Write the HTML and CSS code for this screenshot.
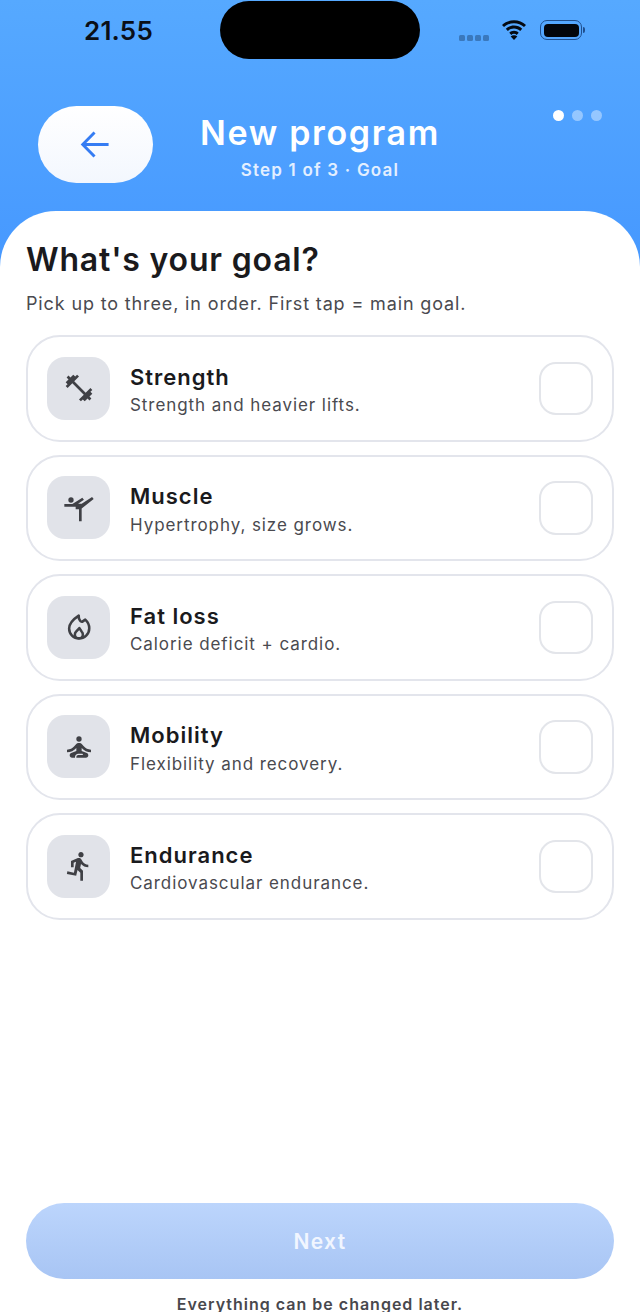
FILE: index.html
```html
<!DOCTYPE html>
<html lang="en">
<head>
<meta charset="utf-8">
<title>New program</title>
<link rel="stylesheet" href="styles.css">
</head>
<body>
<div class="app">
  <header class="hero">
    <div class="status">
      <span class="time">21.55</span>
      <span class="island"></span>
      <div class="status-icons">
        <span class="signal"><i></i><i></i><i></i><i></i></span>
        <svg class="wifi" viewBox="0 0 26 20"><path d="M13 3.2c3.9 0 7.4 1.5 10 3.9l2-2.2C21.800 2 17.600.2 13 .2S4.200 2 1 4.900l2 2.200c2.600-2.400 6.100-3.900 10-3.900z"/><path d="M13 8.600c2.400 0 4.600.9 6.200 2.400l2-2.200C19 6.800 16.100 5.600 13 5.600S7 6.800 4.800 8.800l2 2.200c1.600-1.500 3.800-2.400 6.200-2.400z"/><path d="M13 13.800c1.100 0 2 .4 2.700 1.100l2-2.200C16.400 11.500 14.800 10.800 13 10.800s-3.400.7-4.700 1.900l2 2.200c.7-.7 1.600-1.100 2.700-1.100z"/><path d="M13 20l3.300-3.600c-.9-.7-2-1.100-3.300-1.100s-2.400.4-3.300 1.100z"/></svg>
        <span class="battery"><span class="battery-fill"></span></span>
        <span class="battery-cap"></span>
      </div>
    </div>
    <div class="nav">
      <button class="back" aria-label="Back">
        <svg viewBox="0 0 32 32" class="back-icon"><path d="M29.500 16H3M15 3.500 2.800 16 15 28.500"/></svg>
      </button>
      <div class="titles">
        <h1>New program</h1>
        <p>Step 1 of 3 · Goal</p>
      </div>
      <div class="dots"><i class="on"></i><i></i><i></i></div>
    </div>
  </header>

  <main class="sheet">
    <h2>What's your goal?</h2>
    <p class="lead">Pick up to three, in order. First tap = main goal.</p>
    <ul class="goals">
      <li class="goal">
        <span class="tile"><svg viewBox="0 0 24 24"><path d="M20.570 14.860 22 13.430 20.570 12 17 15.570 8.430 7 12 3.430 10.570 2 9.140 3.430 7.710 2 5.570 4.140 4.140 2.710 2.710 4.140l1.430 1.430L2 7.710l1.430 1.430L2 10.570 3.430 12 7 8.430 15.570 17 12 20.570 13.430 22l1.430-1.430L16.290 22l2.140-2.140 1.430 1.430 1.430-1.430-1.430-1.430L22 16.290z"/></svg></span>
        <div class="copy"><strong>Strength</strong><span>Strength and heavier lifts.</span></div>
        <span class="check"></span>
      </li>
      <li class="goal">
        <span class="tile"><svg viewBox="0 0 24 24"><circle cx="6" cy="6" r="2"/><path d="M1 9h6l7.500-4.700 1.200 1.500L11.300 8.800H14L21.800 3.800 23 5.200 14 12.300V22h-2v-9H9.500V11H1z"/></svg></span>
        <div class="copy"><strong>Muscle</strong><span>Hypertrophy, size grows.</span></div>
        <span class="check"></span>
      </li>
      <li class="goal">
        <span class="tile"><svg class="line" viewBox="0 0 24 24"><path d="M11.800 3.500c-.2 3 1.700 5.300 3 4.300l1.900-1.300c2 1.800 3 4.200 3 6.500 0 4.400-3.600 7.700-7.700 7.700s-7.400-3.300-7.400-7.500C4.600 9 8 6 11.800 3.500z"/><path d="M12.300 12.800l-2.500 2.700c-.6.6-.9 1.300-.9 2.100 0 1.600 1.300 2.900 3 2.900s3-1.300 3-2.900c0-.8-.3-1.500-.9-2.100z"/></svg></span>
        <div class="copy"><strong>Fat loss</strong><span>Calorie deficit + cardio.</span></div>
        <span class="check"></span>
      </li>
      <li class="goal">
        <span class="tile"><svg viewBox="0 0 24 24"><circle cx="12" cy="6" r="2"/><path d="M21 16v-2c-2.240 0-4.160-.96-5.600-2.680l-1.340-1.600c-.38-.46-.94-.72-1.530-.72h-1.050c-.59 0-1.150.26-1.530.72l-1.340 1.600C7.160 13.040 5.240 14 3 14v2c2.770 0 5.190-1.170 7-3.250V15l-3.880 1.550c-.67.27-1.120.93-1.120 1.660C5 19.200 5.800 20 6.790 20H9v-.5c0-1.380 1.120-2.500 2.500-2.500h3c.28 0 .5.220.5.500s-.22.500-.5.500h-3c-.83 0-1.500.67-1.500 1.500v.5h7.210c.99 0 1.790-.8 1.790-1.790 0-.73-.45-1.390-1.120-1.660L14 15v-2.250c1.810 2.080 4.230 3.250 7 3.250z"/></svg></span>
        <div class="copy"><strong>Mobility</strong><span>Flexibility and recovery.</span></div>
        <span class="check"></span>
      </li>
      <li class="goal">
        <span class="tile"><svg viewBox="0 0 24 24"><path d="M13.490 5.480c1.100 0 2-.9 2-2s-.9-2-2-2-2 .9-2 2 .9 2 2 2zm-3.600 13.900l1-4.400 2.100 2v6h2v-7.500l-2.100-2 .6-3c1.300 1.500 3.300 2.500 5.500 2.500v-2c-1.900 0-3.500-1-4.300-2.400l-1-1.600c-.4-.6-1-1-1.700-1-.3 0-.5.1-.8.1l-5.200 2.200v4.700h2v-3.400l1.800-.7-1.600 8.100-4.900-1-.4 2 7 1.400z"/></svg></span>
        <div class="copy"><strong>Endurance</strong><span>Cardiovascular endurance.</span></div>
        <span class="check"></span>
      </li>
    </ul>
    <div class="actions">
      <button class="next">Next</button>
      <p class="note">Everything can be changed later.</p>
    </div>
  </main>
</div>
</body>
</html>
```
FILE: styles.css
```css
* { box-sizing: border-box; }
html, body { margin: 0; padding: 0; }
body {
  width: 640px;
  height: 1312px;
  overflow: hidden;
  background: #fff;
  font-family: "Inter", "Liberation Sans", sans-serif;
}
.app {
  width: 640px;
  height: 1312px;
  display: flex;
  flex-direction: column;
  background: linear-gradient(180deg, #56a9ff 0, #4698ff 270px, #4698ff 100%);
}
.hero { height: 211px; flex: none; }
.status {
  height: 60px;
  padding-top: 1px;
  display: flex;
  align-items: flex-start;
}
.time {
  width: 220px;
  padding: 14px 0 0 84px;
  font-size: 26px;
  line-height: 32px;
  font-weight: 600;
  letter-spacing: 0.200px;
  color: #0a0f18;
}
.island {
  width: 200px;
  height: 58px;
  border-radius: 29px;
  background: #000;
}
.status-icons {
  flex: 1;
  display: flex;
  align-items: flex-start;
  padding: 19px 0 0 39px;
}
.signal {
  display: flex;
  gap: 2.500px;
  margin-top: 15px;
}
.signal i {
  width: 5.500px;
  height: 5.500px;
  border-radius: 1.500px;
  background: #3a78bd;
}
.wifi {
  width: 26px;
  height: 20px;
  margin-left: 12px;
  fill: #050a12;
}
.battery {
  width: 42px;
  height: 20px;
  margin-left: 13.500px;
  padding: 2.500px;
  border: 1.500px solid #1f4f8f;
  border-radius: 7px;
  display: block;
}
.battery-fill {
  display: block;
  height: 100%;
  border-radius: 4px;
  background: #03060c;
}
.battery-cap {
  width: 2px;
  height: 6px;
  margin: 7px 0 0 1px;
  border-radius: 0 2px 2px 0;
  background: #1f4f8f;
}
.nav {
  padding: 46px 38px 0;
  display: grid;
  grid-template-columns: 115px 1fr 115px;
  align-items: start;
}
.back {
  width: 115px;
  height: 77px;
  border: 0;
  padding: 0;
  border-radius: 38.500px;
  background: linear-gradient(180deg, #ffffff, #f3f7fe);
  display: flex;
  align-items: center;
  justify-content: center;
}
.back-icon {
  width: 31px;
  height: 31px;
  fill: none;
  stroke: #357cf3;
  stroke-width: 3;
}
.titles { text-align: center; color: #fff; padding-top: 7px; }
.titles h1 {
  margin: 0;
  font-size: 34px;
  line-height: 40px;
  font-weight: 600;
  letter-spacing: 1.650px;
}
.titles p {
  margin: 5px 0 0;
  font-size: 17px;
  line-height: 24px;
  font-weight: 600;
  letter-spacing: 1.200px;
  color: #e3efff;
}
.dots {
  display: flex;
  justify-content: flex-end;
  gap: 7.500px;
  padding-top: 3.500px;
}
.dots i {
  width: 11.500px;
  height: 11.500px;
  border-radius: 50%;
  background: rgba(255, 255, 255, 0.4);
}
.dots i.on { background: #fff; }
.sheet {
  flex: 1;
  min-height: 0;
  display: flex;
  flex-direction: column;
  padding: 0 26px;
  background: #fff;
  border-radius: 56px 56px 0 0;
}
.sheet h2 {
  margin: 29.500px 0 0;
  font-size: 32px;
  line-height: 38px;
  font-weight: 600;
  letter-spacing: 0.820px;
  color: #1a1a1d;
}
.lead {
  margin: 13.500px 0 0;
  font-size: 18px;
  line-height: 24px;
  letter-spacing: 0.860px;
  color: #4a4a4f;
}
.goals {
  list-style: none;
  margin: 19px 0 0;
  padding: 0;
  display: flex;
  flex-direction: column;
  gap: 13px;
}
.goal {
  height: 106.500px;
  padding: 0 19.500px 0 19px;
  display: flex;
  align-items: center;
  border: 2.500px solid #e3e5ec;
  border-radius: 34px;
  background: #fff;
}
.tile {
  width: 63px;
  height: 63px;
  flex: none;
  display: flex;
  align-items: center;
  justify-content: center;
  border-radius: 18px;
  background: #e1e3e9;
}
.tile svg { width: 32px; height: 32px; fill: #3f4045; }
.tile svg.line { fill: none; stroke: #3f4045; stroke-width: 1.900; stroke-linejoin: round; }
.copy {
  flex: 1;
  margin-left: 20px;
  padding-top: 3px;
  display: flex;
  flex-direction: column;
}
.copy strong {
  font-size: 22px;
  line-height: 28px;
  font-weight: 600;
  letter-spacing: 1px;
  color: #1a1a1d;
}
.copy span {
  margin-top: 2.500px;
  font-size: 17px;
  line-height: 24px;
  letter-spacing: 0.930px;
  color: #4a4a4f;
}
.check {
  width: 53.500px;
  height: 53.500px;
  flex: none;
  border: 2.500px solid #e3e5ea;
  border-radius: 17px;
  background: #fff;
}
.actions {
  margin-top: auto;
  display: flex;
  flex-direction: column;
  align-items: center;
}
.next {
  width: 100%;
  height: 76px;
  border: 0;
  border-radius: 38px;
  background: linear-gradient(180deg, #bcd5fc, #a8c5f4);
  color: #f1f6ff;
  font-family: inherit;
  font-size: 21px;
  font-weight: 600;
  letter-spacing: 1.300px;
}
.note {
  margin: 14px 0 -3px;
  font-size: 16px;
  line-height: 22px;
  font-weight: 600;
  letter-spacing: 1px;
  color: #48484d;
}
```
